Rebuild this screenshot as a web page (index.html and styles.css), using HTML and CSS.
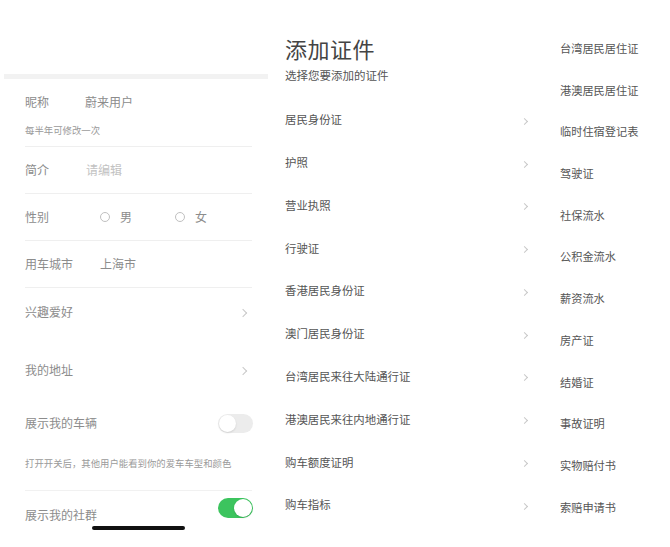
FILE: index.html
```html
<!DOCTYPE html>
<html lang="zh-CN">
<head>
<meta charset="utf-8">
<link rel="stylesheet" href="styles.css">
</head>
<body>
<div class="screens">
  <section class="profile">
    <div class="band"></div>
    <div class="row nick">
      <div class="line"><span class="label">昵称</span><span class="value v-nick">蔚来用户</span></div>
      <div class="hint">每半年可修改一次</div>
    </div>
    <div class="row std"><span class="label">简介</span><span class="value placeholder v-intro">请编辑</span></div>
    <div class="row std">
      <span class="label">性别</span>
      <span class="radio r1"></span><span class="value">男</span>
      <span class="radio r2"></span><span class="value">女</span>
    </div>
    <div class="row std"><span class="label">用车城市</span><span class="value v-city">上海市</span></div>
    <div class="row plain hobby"><span class="label">兴趣爱好</span><span class="chev"></span></div>
    <div class="row plain addr"><span class="label">我的地址</span><span class="chev"></span></div>
    <div class="row plain car"><span class="label">展示我的车辆</span><span class="toggle"></span></div>
    <div class="row longhint"><span class="hint">打开开关后，其他用户能看到你的爱车车型和颜色</span></div>
    <div class="row plain group"><span class="label">展示我的社群</span><span class="toggle on"></span></div>
    <div class="home"></div>
  </section>

  <section class="docs">
    <h1 class="title">添加证件</h1>
    <p class="subtitle">选择您要添加的证件</p>
    <ul class="list">
      <li>居民身份证<span class="chev"></span></li>
      <li>护照<span class="chev"></span></li>
      <li>营业执照<span class="chev"></span></li>
      <li>行驶证<span class="chev"></span></li>
      <li>香港居民身份证<span class="chev"></span></li>
      <li>澳门居民身份证<span class="chev"></span></li>
      <li>台湾居民来往大陆通行证<span class="chev"></span></li>
      <li>港澳居民来往内地通行证<span class="chev"></span></li>
      <li>购车额度证明<span class="chev"></span></li>
      <li>购车指标<span class="chev"></span></li>
    </ul>
  </section>

  <section class="more">
    <ul class="list2">
      <li>台湾居民居住证</li>
      <li>港澳居民居住证</li>
      <li>临时住宿登记表</li>
      <li>驾驶证</li>
      <li>社保流水</li>
      <li>公积金流水</li>
      <li>薪资流水</li>
      <li>房产证</li>
      <li>结婚证</li>
      <li>事故证明</li>
      <li>实物赔付书</li>
      <li>索赔申请书</li>
    </ul>
  </section>
</div>
</body>
</html>
```

FILE: styles.css
```css
* { box-sizing: border-box; }
html, body { margin: 0; padding: 0; background: #fff; }
body {
  font-family: "Noto Sans CJK SC", "Noto Sans", sans-serif;
  width: 670px;
  height: 547px;
  overflow: hidden;
}
.screens { display: flex; height: 547px; }

/* left profile screen */
.profile { width: 265px; position: relative; }
.band { margin: 74px 0 0 4px; height: 5px; background: #f2f2f2; width: 264px; }
.row { margin: 0 12px 0 25px; display: flex; align-items: center; }
.label { font-size: 12px; color: #8c8c8c; line-height: 16px; }
.value { font-size: 12px; color: #8c8c8c; line-height: 16px; }
.placeholder { color: #c4c4c4; }
.hint { font-size: 9.4px; color: #9a9a9a; line-height: 12px; }
.nick { flex-direction: column; align-items: flex-start; height: 68px; border-bottom: 1px solid #efefef; padding-top: 15px; margin-right: 13px; }
.nick .line { display: flex; }
.nick .hint { margin-top: 14px; }
.v-nick { margin-left: 36px; }
.v-intro { margin-left: 37px; color: #c2c2c2; }
.v-city { margin-left: 27px; }
.std { height: 47px; border-bottom: 1px solid #efefef; margin-right: 13px; }
.radio { width: 10px; height: 10px; border: 1px solid #c0c0c0; border-radius: 50%; margin-right: 10px; }
.r1 { margin-left: 51px; }
.r2 { margin-left: 43px; }
.plain { justify-content: space-between; }
.hobby { height: 48px; }
.addr { height: 68px; }
.car { height: 38px; }
.longhint { height: 49px; border-bottom: 1px solid #f1f1f1; padding-bottom: 6px; margin-right: 13px; }
.group { height: 48px; }
.chev {
  width: 6px; height: 6px;
  border-top: 1px solid #c8c8c8; border-right: 1px solid #c8c8c8;
  transform: translateY(1px) rotate(45deg);
  margin-right: 7px;
}
.toggle {
  width: 35px; height: 19px; border-radius: 10px;
  background: #ececec; position: relative;
}
.toggle::after {
  content: ""; position: absolute; left: 1px; top: 1px;
  width: 17px; height: 17px; border-radius: 50%; background: #fff;
  box-shadow: 0 1px 2px rgba(0,0,0,0.12);
}
.toggle.on { background: #3cc45e; height: 20px; margin-top: -14px; }
.toggle.on::after { left: auto; right: 1px; width: 18px; height: 18px; }
.home {
  position: absolute; left: 92px; top: 526px; width: 93px; height: 4px;
  background: #111; border-radius: 2px;
}

/* middle docs screen */
.docs { width: 280px; padding-left: 20px; }
.title { margin: 33px 0 0; font-size: 22px; font-weight: 400; line-height: 30px; color: #444; letter-spacing: 0.5px; }
.subtitle { margin: 4px 0 0; font-size: 11.5px; line-height: 16px; color: #555; }
.list { list-style: none; margin: 15px 0 0; padding: 0; }
.list li {
  height: 42.78px; display: flex; align-items: center; justify-content: space-between;
  font-size: 11.4px; color: #555; padding-right: 18px;
}
.list .chev { width: 5px; height: 5px; margin-right: 0; transform: translateY(2px) rotate(45deg); }

/* right more screen */
.more { width: 125px; padding-left: 15px; }
.list2 { list-style: none; margin: 27px 0 0; padding: 0; }
.list2 li { height: 41.73px; display: flex; align-items: center; font-size: 11.2px; color: #555; }
```
